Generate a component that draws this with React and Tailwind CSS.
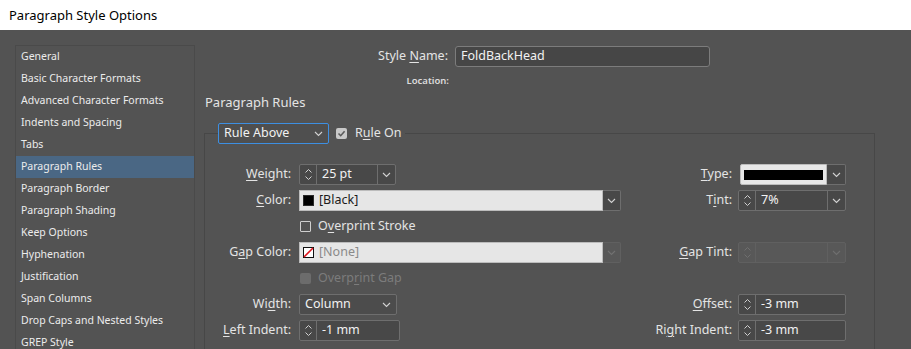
import React from 'react';

const sections = [
  'General',
  'Basic Character Formats',
  'Advanced Character Formats',
  'Indents and Spacing',
  'Tabs',
  'Paragraph Rules',
  'Paragraph Border',
  'Paragraph Shading',
  'Keep Options',
  'Hyphenation',
  'Justification',
  'Span Columns',
  'Drop Caps and Nested Styles',
  'GREP Style',
];

function Chevron({ color = '#d2d2d2' }) {
  return (
    <svg width="9" height="6" viewBox="0 0 9 6">
      <path d="M1 1l3.5 3.5L8 1" fill="none" stroke={color} strokeWidth="1.1" />
    </svg>
  );
}

function UpDown({ color = '#cfcfcf' }) {
  return (
    <svg width="9" height="15" viewBox="0 0 9 15">
      <path d="M1.5 5.5L4.5 2.5L7.5 5.5M1.5 9.5L4.5 12.5L7.5 9.5" fill="none" stroke={color} strokeWidth="1" />
    </svg>
  );
}

// label text with one mnemonic letter underlined
function Lbl({ text, u }) {
  return (
    <span>
      {text.slice(0, u)}
      <span className="underline underline-offset-2">{text[u]}</span>
      {text.slice(u + 1)}
    </span>
  );
}

function Spinner({ value, w, drop, disabled }) {
  const line = disabled ? 'border-[#606060]' : 'border-[#6e6e6e]';
  return (
    <div className={`flex h-[21px] ${w} rounded-[2px] border ${line} ${disabled ? 'bg-[#585858]' : 'bg-[#484848]'}`}>
      <div className={`flex w-[17px] items-center justify-center border-r ${line}`}>
        <UpDown color={disabled ? '#6f6f6f' : '#cfcfcf'} />
      </div>
      <div className="flex flex-1 items-center pl-[5px] text-[#f2f2f2]">{value}</div>
      {drop && (
        <div className={`flex w-[18px] items-center justify-center border-l ${line}`}>
          <Chevron color={disabled ? '#6f6f6f' : '#d2d2d2'} />
        </div>
      )}
    </div>
  );
}

function SwatchSelect({ swatch, text, disabled }) {
  return (
    <div className="flex h-[21px] w-[322px]">
      <div className={`flex flex-1 items-center gap-[5px] border border-[#bcbcbc] bg-[#e6e6e6] pl-[3px] ${disabled ? 'text-[#8a8a8a]' : 'text-[#1c1c1c]'}`}>
        {swatch}
        {text}
      </div>
      <div className={`flex w-[18px] items-center justify-center rounded-r-[2px] border border-l-0 ${disabled ? 'border-[#606060] bg-[#585858]' : 'border-[#6e6e6e] bg-[#484848]'}`}>
        <Chevron color={disabled ? '#727272' : '#d2d2d2'} />
      </div>
    </div>
  );
}

function Row({ left, label, u, right, rlabel, ru }) {
  return (
    <div className="flex h-[21px] items-center justify-between">
      <div className="flex items-center">
        <div className="w-[73px] text-right">{label && <Lbl text={label} u={u} />}</div>
        <div className="ml-[8px]">{left}</div>
      </div>
      {rlabel && (
        <div className="flex items-center">
          <div className="w-[84px] text-right"><Lbl text={rlabel} u={ru} /></div>
          <div className="ml-[6px] flex w-[108px] justify-end">{right}</div>
        </div>
      )}
    </div>
  );
}

function Check({ checked, disabled }) {
  if (disabled) return <span className="block h-[11px] w-[11px] rounded-[2px] bg-[#6c6c6c]" />;
  if (checked)
    return (
      <span className="flex h-[11px] w-[11px] items-center justify-center rounded-[2px] bg-[#c8c8c8]">
        <svg width="9" height="9" viewBox="0 0 9 9">
          <path d="M1.5 4.5L3.7 6.7L7.6 2.2" fill="none" stroke="#5a5a5a" strokeWidth="1.6" />
        </svg>
      </span>
    );
  return <span className="block h-[11px] w-[11px] rounded-[1px] border border-[#cfcfcf]" />;
}

export default function App() {
  return (
    <div className="h-[349px] w-[911px] overflow-hidden font-['Noto_Sans',sans-serif] text-[12.5px]">
      <div className="flex h-[30px] items-center bg-white pl-[9px] pt-[2px] text-[13px] text-black">Paragraph Style Options</div>
      <div className="flex h-[319px] overflow-hidden bg-[#535353] pl-[15px] pt-[15px] text-[#e4e4e4]">
        <div className="h-[360px] w-[180px] shrink-0 border border-[#4a4a4a] text-[10.5px] text-[#ececec]">
          {sections.map((s) => (
            <div
              key={s}
              className={`flex h-[22px] items-center pl-[5px] ${s === 'Paragraph Rules' ? 'bg-[#4a6784]' : ''}`}
            >
              {s}
            </div>
          ))}
        </div>

        <div className="flex-1 pl-[9px]">
          <div className="mt-[1px] flex items-center">
            <div className="w-[244px] text-right">
              <Lbl text="Style Name:" u={6} />
            </div>
            <div className="ml-[7px] flex h-[21px] w-[255px] items-center rounded-[3px] border border-[#7c7c7c] bg-[#464646] pl-[5px] text-[#f2f2f2]">
              FoldBackHead
            </div>
          </div>
          <div className="mt-[4px] flex h-[20px] items-center">
            <div className="w-[245px] text-right text-[9.5px] font-semibold text-[#dcdcdc]">Location:</div>
          </div>
          <div className="mt-[2px] flex h-[20px] items-center pl-[1px] text-[13px]">Paragraph Rules</div>

          <fieldset className="mt-[10px] h-[260px] w-[671px] border border-[#474747] pl-[13px] pr-[28px] pt-[20px]">
            <legend className="pr-[3px]">
              <div className="flex items-center">
                <div className="flex h-[21px] w-[111px] items-center justify-between rounded-[2px] border border-[#3d8fe2] bg-[#4f4f4f] pl-[5px] pr-[5px] text-[#f2f2f2]">
                  Rule Above
                  <Chevron />
                </div>
                <div className="ml-[7px]">
                  <Check checked />
                </div>
                <div className="ml-[8px]">
                  <Lbl text="Rule On" u={1} />
                </div>
              </div>
            </legend>

            <div className="flex flex-col gap-[5px]">
              <Row
                label="Weight:"
                u={0}
                left={<Spinner value="25 pt" w="w-[97px]" drop />}
                rlabel="Type:"
                ru={0}
                right={
                  <div className="flex h-[21px] w-[106px]">
                    <div className="flex flex-1 items-center rounded-l-[2px] border border-[#bcbcbc] bg-[#e8e8e8] px-[3px]">
                      <div className="h-[10px] w-full bg-black" />
                    </div>
                    <div className="flex w-[19px] items-center justify-center rounded-r-[2px] border border-l-0 border-[#6e6e6e] bg-[#484848]">
                      <Chevron />
                    </div>
                  </div>
                }
              />
              <Row
                label="Color:"
                u={0}
                left={
                  <SwatchSelect
                    text="[Black]"
                    swatch={<span className="block h-[11px] w-[11px] border border-[#2a2a2a] bg-black" />}
                  />
                }
                rlabel="Tint:"
                ru={1}
                right={<Spinner value="7%" w="w-[108px]" drop />}
              />
              <Row
                left={
                  <div className="flex items-center pl-[1px]">
                    <Check />
                    <span className="ml-[7px]">
                      <Lbl text="Overprint Stroke" u={1} />
                    </span>
                  </div>
                }
              />
              <Row
                label="Gap Color:"
                u={1}
                left={
                  <SwatchSelect
                    disabled
                    text="[None]"
                    swatch={
                      <svg width="11" height="11" viewBox="0 0 11 11" className="block">
                        <rect x="0.5" y="0.5" width="10" height="10" fill="#fff" stroke="#111" />
                        <path d="M1 10L10 1" stroke="#e0141e" strokeWidth="1.6" />
                      </svg>
                    }
                  />
                }
                rlabel="Gap Tint:"
                ru={0}
                right={<Spinner value="" w="w-[108px]" drop disabled />}
              />
              <Row
                left={
                  <div className="flex items-center pl-[1px] text-[#7c7c7c]">
                    <Check disabled />
                    <span className="ml-[7px]">
                      <Lbl text="Overprint Gap" u={5} />
                    </span>
                  </div>
                }
              />
              <Row
                label="Width:"
                u={2}
                left={
                  <div className="flex h-[21px] w-[98px] items-center justify-between rounded-[2px] border border-[#6e6e6e] bg-[#4c4c4c] pl-[5px] pr-[5px] text-[#f2f2f2]">
                    Column
                    <Chevron />
                  </div>
                }
                rlabel="Offset:"
                ru={0}
                right={<Spinner value="-3 mm" w="w-[108px]" />}
              />
              <Row
                label="Left Indent:"
                u={0}
                left={<Spinner value="-1 mm" w="w-[101px]" />}
                rlabel="Right Indent:"
                ru={2}
                right={<Spinner value="-3 mm" w="w-[108px]" />}
              />
            </div>
          </fieldset>
        </div>
      </div>
    </div>
  );
}
